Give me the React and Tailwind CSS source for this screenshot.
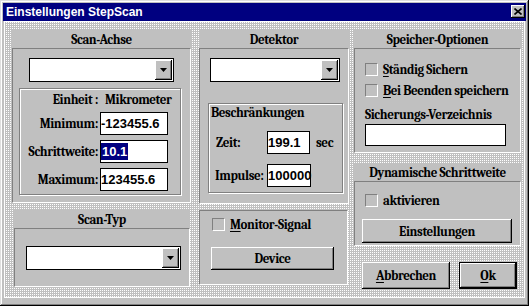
import React from "react";

const serif = "font-serif font-bold text-[13px] tracking-[-0.4px]";
const sans = "font-[Arial] font-bold text-[13px]";
const raised =
  "bg-[#c0c0c0] shadow-[inset_-1px_-1px_0_#000,inset_1px_1px_0_#fff,inset_-2px_-2px_0_#808080]";

function Panel({ title, className = "", bodyClass = "", children }) {
  return (
    <div className={`flex flex-col bg-[#c0c0c0] ${className}`}>
      {title && (
        <div className={`h-[18px] flex items-center justify-center leading-none ${serif}`}>
          {title}
        </div>
      )}
      <div
        className={`flex-1 flex flex-col border border-t-[#808080] border-l-[#808080] border-r-white border-b-white ${bodyClass}`}
      >
        {children}
      </div>
    </div>
  );
}

function Combo({ className = "" }) {
  return (
    <div className={`h-[24px] bg-white border border-black flex justify-end items-center pr-[1px] ${className}`}>
      <div className={`w-[17px] h-[20px] flex items-center justify-center ${raised}`}>
        <svg width="7" height="4" viewBox="0 0 7 4">
          <polygon points="0,0 7,0 3.5,4" fill="#000" />
        </svg>
      </div>
    </div>
  );
}

function Field({ value, className = "", selected }) {
  return (
    <div className={`h-[23px] bg-white border border-black flex items-center leading-none ${sans} ${className}`}>
      {selected ? (
        <span className="bg-[#000080] text-white px-[1px] py-[2px]">{value}</span>
      ) : (
        <span>{value}</span>
      )}
    </div>
  );
}

function Check({ label, u, className = "" }) {
  return (
    <div className={`flex items-center gap-[5px] ${className}`}>
      <div className="w-[13px] h-[13px] bg-[#c0c0c0] border border-t-[#808080] border-l-[#808080] border-r-white border-b-white" />
      <span className={`leading-none ${serif}`}>
        {u && <u className="underline-offset-2">{u}</u>}
        {label}
      </span>
    </div>
  );
}

function Button({ children, className = "" }) {
  return (
    <div className={`flex items-center justify-center leading-none ${serif} ${raised} ${className}`}>
      {children}
    </div>
  );
}

export default function App() {
  return (
    <div className="w-[529px] h-[306px] bg-[#c0c0c0] p-[3px] pb-[8px] flex flex-col shadow-[inset_-1px_-1px_0_#000,inset_1px_1px_0_#dfdfdf,inset_-2px_-2px_0_#808080,inset_2px_2px_0_#fff]">
      {/* TITLE */}
      <div className="h-[18px] bg-[#000080] flex items-start justify-between pl-[3px] pr-[1px] pt-[2px]">
        <span className="text-white font-[Arial] font-bold text-[12px] leading-[14px]">
          Einstellungen StepScan
        </span>
        <div className={`w-[14px] h-[13px] flex items-center justify-center ${raised}`}>
          <svg width="8" height="7" viewBox="0 0 8 7">
            <path d="M0.5 0.5 L7.5 6.5 M7.5 0.5 L0.5 6.5" stroke="#000" strokeWidth="1.6" />
          </svg>
        </div>
      </div>

      {/* BODY */}
      <div className="flex-1 mx-[1px] border border-white bg-[conic-gradient(#fff_25%,#c0c0c0_0)] bg-[length:2px_2px] pl-[7px] pt-[8px] flex">
        {/* COLUMN 1 */}
        <div className="w-[179px] flex flex-col">
          <Panel title="Scan-Achse" className="h-[173px]">
            <Combo className="mt-[9px] ml-[16px] w-[145px]" />
            <div className="mt-[6px] ml-[6px] w-[162px] h-[107px] border border-[#808080] shadow-[inset_1px_1px_0_#fff,1px_1px_0_#fff] flex flex-col">
              <div className="h-[20px] flex items-center">
                <span className={`w-[78px] text-right leading-none ${serif}`}>Einheit :</span>
                <span className={`ml-[7px] leading-none ${serif}`}>Mikrometer</span>
              </div>
              {[
                ["Minimum:", "-123455.6"],
                ["Schrittweite:", "10.1"],
                ["Maximum:", "123455.6"],
              ].map(([label, value], i) => (
                <div key={label} className={`flex items-center ${i === 0 ? "mt-[3px]" : "mt-[5px]"}`}>
                  <span className={`w-[78px] text-right leading-none ${serif}`}>{label}</span>
                  <Field value={value} selected={i === 1} className="ml-[2px] w-[68px]" />
                </div>
              ))}
            </div>
          </Panel>
          <Panel title="Scan-Typ" className="mt-[7px] ml-[2px] w-[176px] h-[77px]">
            <Combo className="mt-[17px] ml-[11px] w-[155px]" />
          </Panel>
        </div>

        {/* COLUMN 2 */}
        <div className="ml-[8px] w-[150px] flex flex-col">
          <Panel title="Detektor" className="h-[174px]">
            <Combo className="mt-[9px] ml-[10px] w-[130px]" />
            <div className="mt-[21px] ml-[8px] w-[135px] h-[90px] border border-[#808080] shadow-[inset_1px_1px_0_#fff,1px_1px_0_#fff] flex flex-col">
              <div className={`h-[16px] pl-[2px] flex items-center leading-none ${serif}`}>Beschränkungen</div>
              <div className="mt-[11px] flex items-center">
                <span className={`w-[58px] pl-[7px] leading-none ${serif}`}>Zeit:</span>
                <Field value="199.1" className="w-[43px]" />
                <span className={`ml-[6px] leading-none ${serif} text-[12px]`}>sec</span>
              </div>
              <div className="mt-[10px] flex items-center">
                <span className={`w-[58px] pl-[6px] leading-none ${serif}`}>Impulse:</span>
                <Field value="100000" className="w-[44px]" />
              </div>
            </div>
          </Panel>
          <Panel className="mt-[6px] w-[149px] h-[75px]">
            <Check u="M" label="onitor-Signal" className="mt-[7px] ml-[12px]" />
            <Button className="mt-[16px] ml-[11px] w-[123px] h-[23px]">Device</Button>
          </Panel>
        </div>

        {/* COLUMN 3 */}
        <div className="ml-[5px] w-[167px] flex flex-col">
          <Panel title="Speicher-Optionen" className="h-[123px]">
            <Check u="S" label="tändig Sichern" className="mt-[14px] ml-[10px]" />
            <Check u="B" label="ei Beenden speichern" className="mt-[8px] ml-[10px]" />
            <div className={`mt-[10px] ml-[10px] h-[14px] flex items-center leading-none ${serif}`}>
              Sicherungs-Verzeichnis
            </div>
            <div className="mt-[3px] ml-[10px] w-[141px] h-[22px] bg-white border border-black" />
          </Panel>
          <Panel title="Dynamische Schrittweite" className="mt-[10px] h-[83px]">
            <Check label="aktivieren" className="mt-[12px] ml-[10px]" />
            <Button className="mt-[12px] ml-[7px] w-[150px] h-[24px]">Einstellungen</Button>
          </Panel>
          <div className="mt-[16px] ml-[8px] flex gap-[9px]">
            <Button className="w-[88px] h-[27px]">
              <span>
                <u className="underline-offset-2">A</u>bbrechen
              </span>
            </Button>
            <div className="w-[58px] h-[27px] border border-black flex">
              <Button className="flex-1">
                <span>
                  <u className="underline-offset-2">O</u>k
                </span>
              </Button>
            </div>
          </div>
        </div>
      </div>
    </div>
  );
}
